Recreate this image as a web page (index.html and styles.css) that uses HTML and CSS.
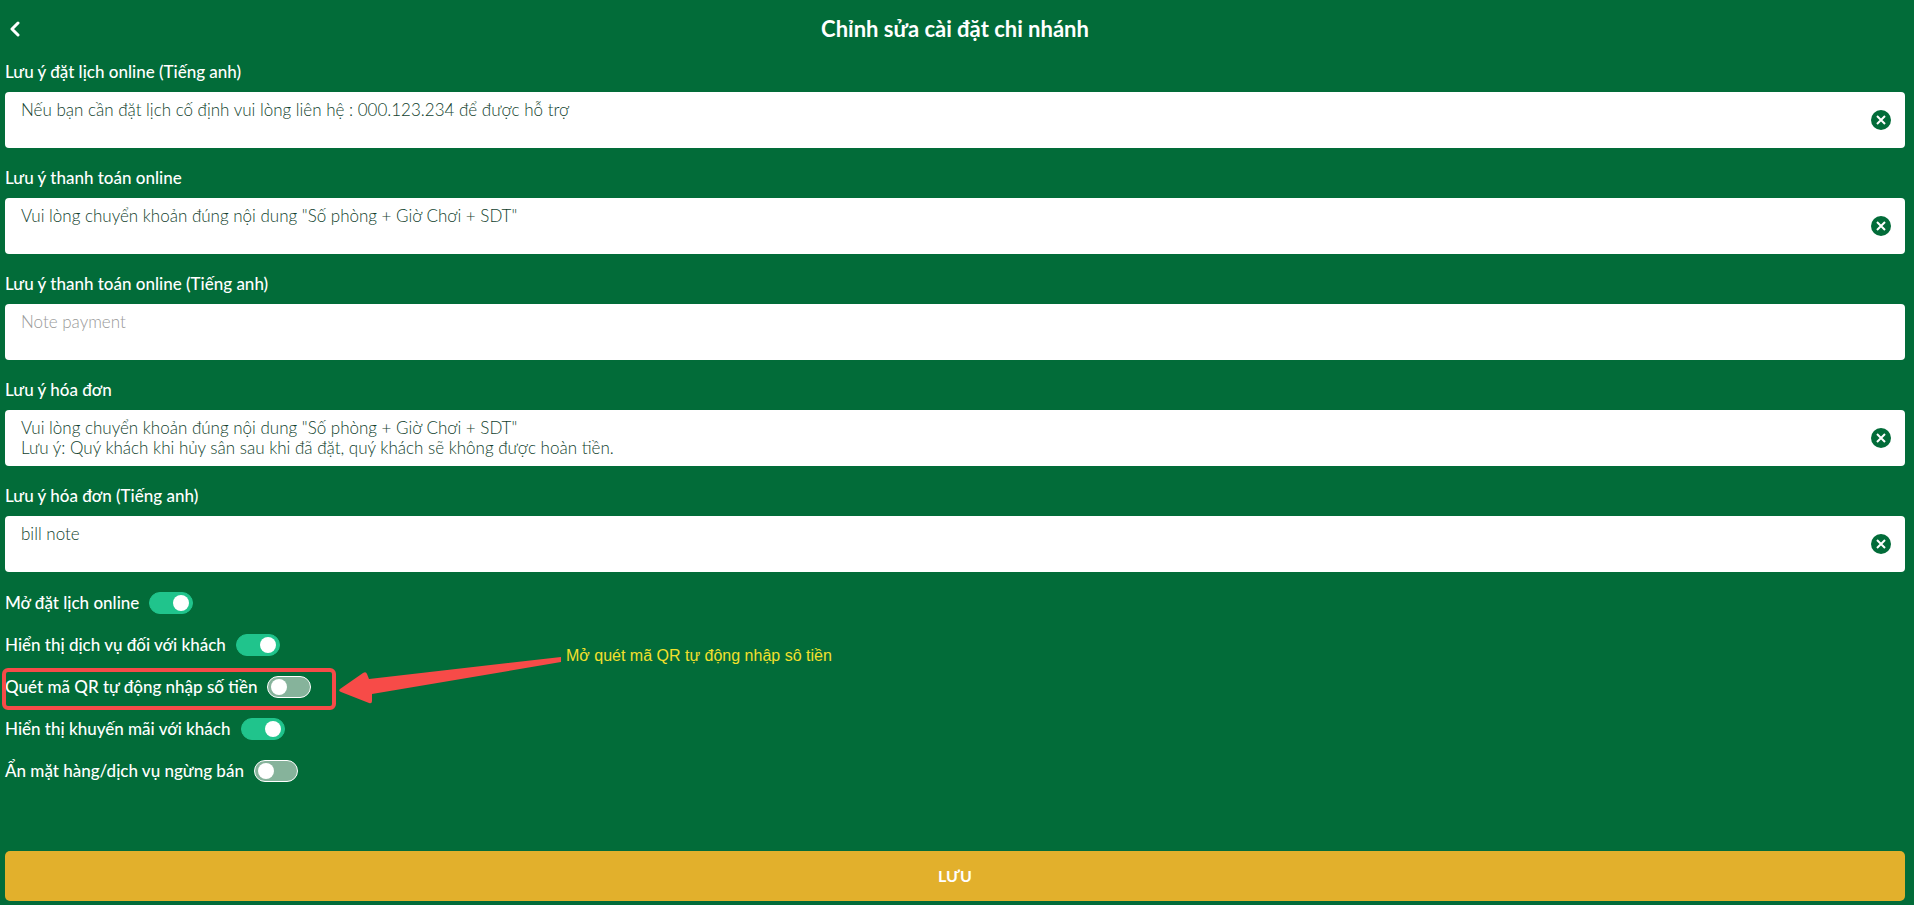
FILE: index.html
```html
<!DOCTYPE html>
<html lang="vi">
<head>
    <meta charset="UTF-8">
    <meta name="viewport" content="width=device-width, initial-scale=1.0">
    <title>Chỉnh sửa cài đặt chi nhánh</title>
    <link rel="stylesheet" href="styles.css">
</head>
<body>
    <svg class="sprite" aria-hidden="true">
        <symbol id="icon-clear" viewBox="0 0 20 20">
            <circle cx="10" cy="10" r="10" fill="#026c39"/>
            <path d="M6 6l8 8M14 6l-8 8" fill="none" stroke="#fff" stroke-width="2"/>
        </symbol>
    </svg>

    <header class="header">
        <button type="button" class="back" aria-label="Quay lại">
            <svg width="10" height="16" viewBox="0 0 10 16"><path d="M8 2L2 8l6 6" fill="none" stroke="#fff" stroke-width="3" stroke-linecap="round" stroke-linejoin="round"/></svg>
        </button>
        <h1>Chỉnh sửa cài đặt chi nhánh</h1>
    </header>

    <form class="settings">
        <div class="field">
            <label for="bookingNoteEn">Lưu ý đặt lịch online (Tiếng anh)</label>
            <div class="input-box">
                <textarea id="bookingNoteEn" name="bookingNoteEn" rows="2">Nếu bạn cần đặt lịch cố định vui lòng liên hệ : 000.123.234 để được hỗ trợ</textarea>
                <button type="button" class="clear" aria-label="Xóa"><svg width="20" height="20"><use href="#icon-clear"/></svg></button>
            </div>
        </div>

        <div class="field">
            <label for="paymentNote">Lưu ý thanh toán online</label>
            <div class="input-box">
                <textarea id="paymentNote" name="paymentNote" rows="2">Vui lòng chuyển khoản đúng nội dung "Số phòng + Giờ Chơi + SDT"</textarea>
                <button type="button" class="clear" aria-label="Xóa"><svg width="20" height="20"><use href="#icon-clear"/></svg></button>
            </div>
        </div>

        <div class="field">
            <label for="paymentNoteEn">Lưu ý thanh toán online (Tiếng anh)</label>
            <div class="input-box">
                <textarea id="paymentNoteEn" name="paymentNoteEn" rows="2" placeholder="Note payment"></textarea>
            </div>
        </div>

        <div class="field">
            <label for="billNote">Lưu ý hóa đơn</label>
            <div class="input-box">
                <textarea id="billNote" name="billNote" rows="2">Vui lòng chuyển khoản đúng nội dung "Số phòng + Giờ Chơi + SDT"
Lưu ý: Quý khách khi hủy sân sau khi đã đặt, quý khách sẽ không được hoàn tiền.</textarea>
                <button type="button" class="clear" aria-label="Xóa"><svg width="20" height="20"><use href="#icon-clear"/></svg></button>
            </div>
        </div>

        <div class="field">
            <label for="billNoteEn">Lưu ý hóa đơn (Tiếng anh)</label>
            <div class="input-box">
                <textarea id="billNoteEn" name="billNoteEn" rows="2">bill note</textarea>
                <button type="button" class="clear" aria-label="Xóa"><svg width="20" height="20"><use href="#icon-clear"/></svg></button>
            </div>
        </div>

        <div class="switch-row">
            <label for="openBooking">Mở đặt lịch online</label>
            <input type="checkbox" class="switch" id="openBooking" checked>
        </div>
        <div class="switch-row">
            <label for="showService">Hiển thị dịch vụ đối với khách</label>
            <input type="checkbox" class="switch" id="showService" checked>
        </div>
        <div class="switch-row">
            <label for="qrAmount">Quét mã QR tự động nhập số tiền</label>
            <input type="checkbox" class="switch" id="qrAmount">
            <div class="highlight"></div>
            <div class="callout">
                <svg width="224" height="58" viewBox="0 0 224 58"><path d="M223 11L31 33L29 28Q28 25 25 27L2 43Q0 45 3 46L31 57Q34 58 34 55L34 48L223 16Z" fill="#f74b48"/></svg>
                <span>Mở quét mã QR tự động nhập sô tiền</span>
            </div>
        </div>
        <div class="switch-row">
            <label for="showPromo">Hiển thị khuyến mãi với khách</label>
            <input type="checkbox" class="switch" id="showPromo" checked>
        </div>
        <div class="switch-row">
            <label for="hideStopped">Ẩn mặt hàng/dịch vụ ngừng bán</label>
            <input type="checkbox" class="switch" id="hideStopped">
        </div>

        <button type="submit" class="save">LƯU</button>
    </form>
</body>
</html>
```
FILE: styles.css
```css
* { box-sizing: border-box; }
body {
    display: flex;
    flex-direction: column;
    min-height: 100vh;
    margin: 0;
    padding: 0 9px 4px 5px;
    background: #026c39;
    color: #fff;
    font-family: Lato, "Noto Sans", sans-serif;
    font-size: 17px;
    line-height: 20px;
}
button { padding: 0; border: 0; background: none; cursor: pointer; }
svg { display: block; }
.sprite { position: absolute; width: 0; height: 0; }

.header { display: grid; grid-template-columns: 20px 1fr 20px; align-items: center; padding: 16px 0 20px; }
.header h1 { margin: 0; font-size: 22px; line-height: 26px; font-weight: 700; text-align: center; }
.back { display: flex; padding-left: 5px; }

.settings { display: flex; flex: 1; flex-direction: column; gap: 20px; }
.field { display: flex; flex-direction: column; gap: 10px; }
label { font-weight: 500; }
.input-box { display: flex; align-items: center; padding-right: 14px; border-radius: 4px; background: #fff; }
textarea {
    flex: 1;
    height: 56px;
    padding: 8px 16px;
    border: 0;
    outline: 0;
    background: none;
    color: #123f2e;
    font: inherit;
    font-weight: 300;
    resize: none;
    overflow: hidden;
}
textarea::placeholder { color: #999; opacity: 1; }

.switch-row { position: relative; display: flex; align-items: center; gap: 10px; height: 22px; }
.switch {
    display: flex;
    align-items: center;
    appearance: none;
    width: 44px;
    height: 22px;
    margin: 0;
    padding: 0 3px;
    border: 1px solid #fff;
    border-radius: 11px;
    background: #86b39b;
    cursor: pointer;
}
.switch::before { content: ""; width: 16px; height: 16px; border-radius: 50%; background: #fff; }
.switch:checked { justify-content: flex-end; border-color: #20c48c; background: #20c48c; }

/* red frame and arrow over the QR row */
.highlight { position: absolute; top: -8px; left: -3px; width: 334px; height: 42px; border: 4px solid #f74b48; border-radius: 6px; }
.callout { position: absolute; top: -30px; left: 333px; display: flex; gap: 4px; white-space: nowrap; }
.callout span { color: #f2e02c; font-family: "Liberation Sans", Arial, sans-serif; font-size: 16px; }

.save { height: 50px; margin-top: auto; border-radius: 5px; background: #e2b02c; color: #fff; font: inherit; font-size: 16px; font-weight: 700; }
```
